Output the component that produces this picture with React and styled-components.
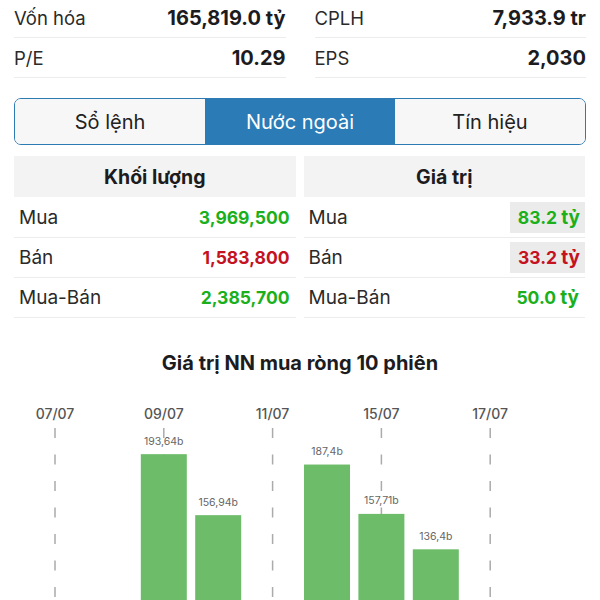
import React from "react";
import styled, { createGlobalStyle } from "styled-components";

const Global = createGlobalStyle`
  html, body { margin: 0; padding: 0; background: #fff; }
  body { font-family: Inter, "Noto Sans", "Liberation Sans", sans-serif; color: #1c1c1e; overflow: hidden; }
`;

const Page = styled.div`
  width: 600px;
  height: 600px;
  overflow: hidden;
  display: flex;
  flex-direction: column;
  & > * { flex-shrink: 0; }
`;

const Stats = styled.div`
  display: grid;
  grid-template-columns: 1fr 1fr;
  column-gap: 29px;
  padding: 0 14px;
  margin-top: -2px;
`;

const StatRow = styled.div`
  height: 39px;
  display: flex;
  align-items: center;
  justify-content: space-between;
  border-bottom: 1px solid #ececec;
`;

const StatLabel = styled.span`
  font-size: 18.5px;
  color: #2a2a2a;
`;

const StatValue = styled.span`
  font-size: 20px;
  font-weight: 700;
  color: #1c1c1e;
`;

const Tabs = styled.div`
  margin: 20px 14px 0;
  height: 47px;
  box-sizing: border-box;
  border: 1.5px solid #2e7bb4;
  border-radius: 7px;
  overflow: hidden;
  display: grid;
  grid-template-columns: 1fr 1fr 1fr;
`;

const Tab = styled.div`
  display: flex;
  align-items: center;
  justify-content: center;
  font-size: 20px;
  background: ${(p) => (p.$active ? "#2a7bb6" : "#f7f7f7")};
  color: ${(p) => (p.$active ? "#ffffff" : "#222")};
`;

const Tables = styled.div`
  margin: 11px 15px 0 14px;
  display: grid;
  grid-template-columns: 1fr 1fr;
  column-gap: 8px;
`;

const Col = styled.div`
  display: flex;
  flex-direction: column;
`;

const Head = styled.div`
  height: 41px;
  background: #f3f3f3;
  display: flex;
  align-items: center;
  justify-content: center;
  font-weight: 700;
  font-size: 19.5px;
  color: #1c1c1e;
  margin-bottom: 1px;
`;

const Row = styled.div`
  height: 40px;
  box-sizing: border-box;
  border-bottom: 1px solid #ececec;
  display: flex;
  align-items: center;
  justify-content: space-between;
  padding: 0 6px 0 5px;
`;

const Label = styled.span`
  font-size: 19px;
  color: #2a2a2a;
`;

const Value = styled.span`
  font-size: 17.5px;
  font-weight: 700;
  color: ${(p) => (p.$tone === "red" ? "#c4121f" : "#1bb01b")};
  ${(p) =>
    p.$boxed &&
    `
    background: #ebebeb;
    height: 31px;
    display: flex;
    align-items: center;
    padding: 0 5px 0 8px;
    margin-right: -6px;
  `}
`;

const Unit = styled.span`
  font-size: 19px;
`;

const ChartTitle = styled.div`
  margin-top: 33px;
  text-align: center;
  font-weight: 700;
  font-size: 20px;
  color: #1c1c1e;
`;

const ChartSvg = styled.svg`
  display: block;
  margin-top: 21px;
`;

const vol = [
  { l: "Mua", v: "3,969,500", t: "green" },
  { l: "Bán", v: "1,583,800", t: "red" },
  { l: "Mua-Bán", v: "2,385,700", t: "green" },
];
const val = [
  { l: "Mua", v: "83.2", t: "green", b: true },
  { l: "Bán", v: "33.2", t: "red", b: true },
  { l: "Mua-Bán", v: "50.0", t: "green" },
];

const slotX = (i) => 55 + i * 54.4;
const dates = [
  [0, "07/07"],
  [2, "09/07"],
  [4, "11/07"],
  [6, "15/07"],
  [8, "17/07"],
];
const bars = [
  [2, 193.64, "193,64b"],
  [3, 156.94, "156,94b"],
  [5, 187.4, "187,4b"],
  [6, 157.71, "157,71b"],
  [7, 136.4, "136,4b"],
];
const BASE = 380;
const K = 1.662;

function Chart() {
  return (
    <ChartSvg width="600" height="210" viewBox="0 0 600 210">
      {dates.map(([i, d]) => (
        <g key={d}>
          <line
            x1={slotX(i)}
            x2={slotX(i)}
            y1={32}
            y2={210}
            stroke="#ababab"
            strokeWidth="1.5"
            strokeDasharray="10 16.5"
          />
          <text
            x={slotX(i)}
            y={23}
            textAnchor="middle"
            fontSize="14"
            fontWeight="500"
            fill="#555"
            fontFamily="Inter, 'Liberation Sans', sans-serif"
          >
            {d}
          </text>
        </g>
      ))}
      {bars.map(([i, v, lbl]) => {
        const top = BASE - v * K;
        return (
          <g key={lbl}>
            <rect x={slotX(i) - 23} y={top} width="46" height={210 - top} fill="#6cbc69" />
            <text
              x={slotX(i)}
              y={top - 9.5}
              textAnchor="middle"
              fontSize="10.5"
              fill="#666"
              fontFamily="Inter, 'Liberation Sans', sans-serif"
            >
              {lbl}
            </text>
          </g>
        );
      })}
    </ChartSvg>
  );
}

export default function App() {
  return (
    <Page>
      <Global />
      <Stats>
        <StatRow>
          <StatLabel>Vốn hóa</StatLabel>
          <StatValue>165,819.0 tỷ</StatValue>
        </StatRow>
        <StatRow>
          <StatLabel>CPLH</StatLabel>
          <StatValue>7,933.9 tr</StatValue>
        </StatRow>
        <StatRow>
          <StatLabel>P/E</StatLabel>
          <StatValue>10.29</StatValue>
        </StatRow>
        <StatRow>
          <StatLabel>EPS</StatLabel>
          <StatValue>2,030</StatValue>
        </StatRow>
      </Stats>
      <Tabs>
        <Tab>Sổ lệnh</Tab>
        <Tab $active>Nước ngoài</Tab>
        <Tab>Tín hiệu</Tab>
      </Tabs>
      <Tables>
        <Col>
          <Head>Khối lượng</Head>
          {vol.map((r) => (
            <Row key={r.l}>
              <Label>{r.l}</Label>
              <Value $tone={r.t}>{r.v}</Value>
            </Row>
          ))}
        </Col>
        <Col>
          <Head>Giá trị</Head>
          {val.map((r) => (
            <Row key={r.l}>
              <Label>{r.l}</Label>
              <Value $tone={r.t} $boxed={r.b}>
                {r.v}&nbsp;<Unit>tỷ</Unit>
              </Value>
            </Row>
          ))}
        </Col>
      </Tables>
      <ChartTitle>Giá trị NN mua ròng 10 phiên</ChartTitle>
      <Chart />
    </Page>
  );
}
